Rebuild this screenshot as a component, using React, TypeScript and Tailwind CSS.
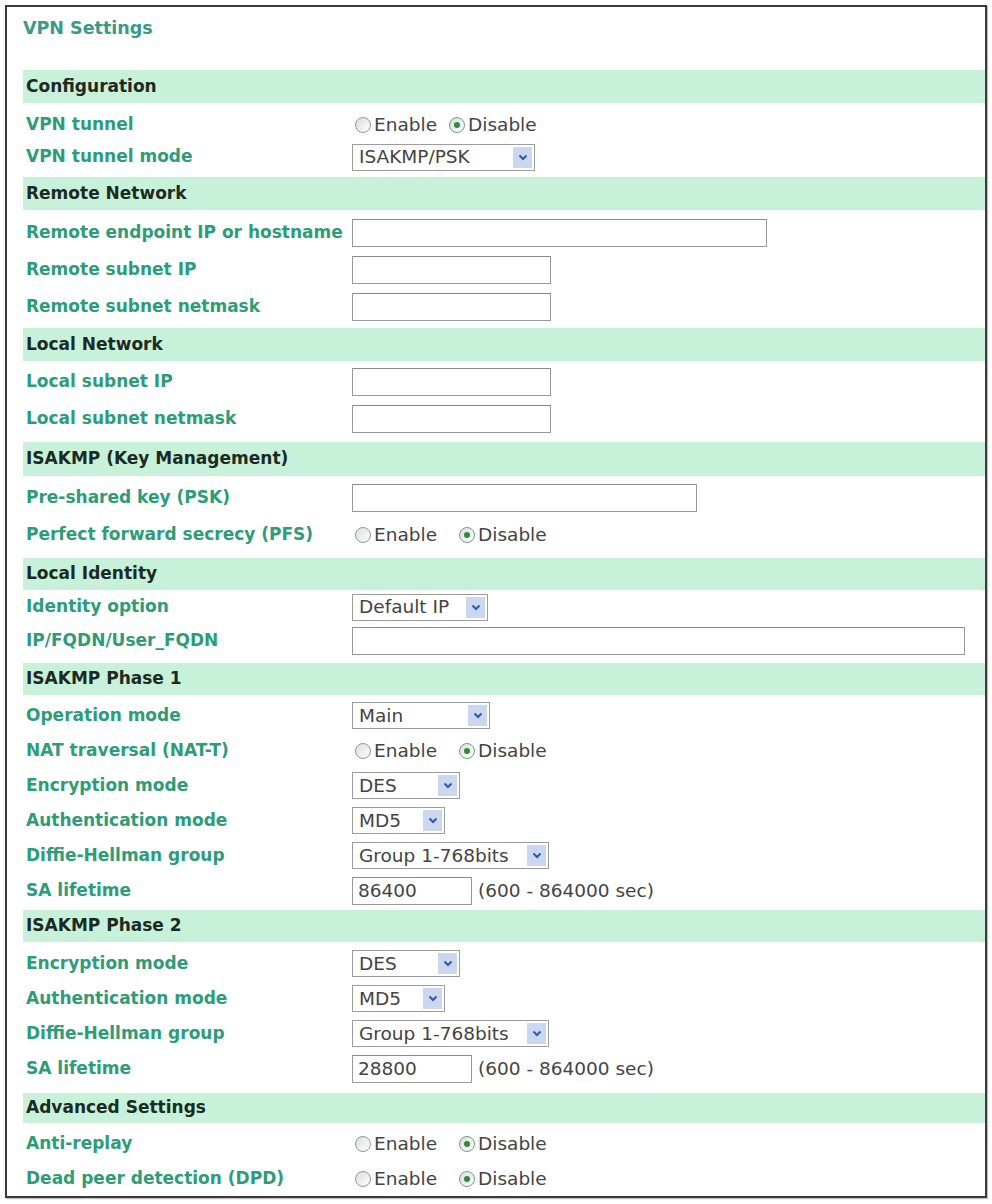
import React from 'react';

type Field =
  | { label: string; kind: 'radio'; h: number; tight?: boolean }
  | { label: string; kind: 'select'; h: number; value: string; w: number }
  | { label: string; kind: 'input'; h: number; w: number; value?: string; note?: string };

type Section = { title: string; hh: number; pt: number; pb: number; fields: Field[] };

const sections: Section[] = [
  {
    title: 'Configuration', hh: 33, pt: 6, pb: 4,
    fields: [
      { label: 'VPN tunnel', kind: 'radio', h: 32, tight: true },
      { label: 'VPN tunnel mode', kind: 'select', h: 32, value: 'ISAKMP/PSK', w: 183 },
    ],
  },
  {
    title: 'Remote Network', hh: 33, pt: 4, pb: 3,
    fields: [
      { label: 'Remote endpoint IP or hostname', kind: 'input', h: 37, w: 415 },
      { label: 'Remote subnet IP', kind: 'input', h: 37, w: 199 },
      { label: 'Remote subnet netmask', kind: 'input', h: 37, w: 199 },
    ],
  },
  {
    title: 'Local Network', hh: 33, pt: 2, pb: 5,
    fields: [
      { label: 'Local subnet IP', kind: 'input', h: 37, w: 199 },
      { label: 'Local subnet netmask', kind: 'input', h: 37, w: 199 },
    ],
  },
  {
    title: 'ISAKMP (Key Management)', hh: 34, pt: 3, pb: 5,
    fields: [
      { label: 'Pre-shared key (PSK)', kind: 'input', h: 37, w: 345 },
      { label: 'Perfect forward secrecy (PFS)', kind: 'radio', h: 37 },
    ],
  },
  {
    title: 'Local Identity', hh: 32, pt: 0, pb: 5,
    fields: [
      { label: 'Identity option', kind: 'select', h: 34, value: 'Default IP', w: 136 },
      { label: 'IP/FQDN/User_FQDN', kind: 'input', h: 34, w: 613 },
    ],
  },
  {
    title: 'ISAKMP Phase 1', hh: 32, pt: 3, pb: 2,
    fields: [
      { label: 'Operation mode', kind: 'select', h: 35, value: 'Main', w: 138 },
      { label: 'NAT traversal (NAT-T)', kind: 'radio', h: 35 },
      { label: 'Encryption mode', kind: 'select', h: 35, value: 'DES', w: 108 },
      { label: 'Authentication mode', kind: 'select', h: 35, value: 'MD5', w: 93 },
      { label: 'Diffie-Hellman group', kind: 'select', h: 35, value: 'Group 1-768bits', w: 197 },
      { label: 'SA lifetime', kind: 'input', h: 35, w: 120, value: '86400', note: '(600 - 864000 sec)' },
    ],
  },
  {
    title: 'ISAKMP Phase 2', hh: 32, pt: 4, pb: 7,
    fields: [
      { label: 'Encryption mode', kind: 'select', h: 35, value: 'DES', w: 108 },
      { label: 'Authentication mode', kind: 'select', h: 35, value: 'MD5', w: 93 },
      { label: 'Diffie-Hellman group', kind: 'select', h: 35, value: 'Group 1-768bits', w: 197 },
      { label: 'SA lifetime', kind: 'input', h: 35, w: 120, value: '28800', note: '(600 - 864000 sec)' },
    ],
  },
  {
    title: 'Advanced Settings', hh: 30, pt: 3, pb: 0,
    fields: [
      { label: 'Anti-replay', kind: 'radio', h: 35 },
      { label: 'Dead peer detection (DPD)', kind: 'radio', h: 35 },
    ],
  },
];

const labelFont = { fontFamily: '"DejaVu Sans", Verdana, sans-serif' };

function Radio({ checked, text }: { checked?: boolean; text: string }) {
  return (
    <span className="inline-flex items-center">
      <span
        className={
          'flex h-[16px] w-[16px] items-center justify-center rounded-full border-[1.5px] bg-gradient-to-br from-[#dcdcdc] to-white ' +
          (checked ? 'border-[#6f9f80]' : 'border-[#8f9898]')
        }
      >
        {checked && <span className="h-[6px] w-[6px] rounded-full bg-[#2f8a3a]" />}
      </span>
      <span className="ml-[3px]">{text}</span>
    </span>
  );
}

function Select({ value, w }: { value: string; w: number }) {
  return (
    <div
      className="flex h-[27px] items-center justify-between border border-[#9c9c9c] bg-white pl-[6px] pr-[2px]"
      style={{ width: w }}
    >
      <span>{value}</span>
      <span className="flex h-[21px] w-[19px] items-center justify-center bg-[#cad7f1]">
        <svg width="10" height="7" viewBox="0 0 10 7">
          <path d="M1.5 1.5 L5 5 L8.5 1.5" fill="none" stroke="#34589c" strokeWidth="2" />
        </svg>
      </span>
    </div>
  );
}

function Input({ w, value }: { w: number; value?: string }) {
  return (
    <div
      className="flex h-[28px] items-center border border-[#999] border-t-[#8a8a8a] bg-white pl-[5px]"
      style={{ width: w }}
    >
      {value}
    </div>
  );
}

function Value({ f }: { f: Field }) {
  if (f.kind === 'radio') {
    return (
      <div className={'flex items-center pl-[3px] ' + (f.tight ? 'gap-[12px]' : 'gap-[22px]')}>
        <Radio text="Enable" />
        <Radio checked text="Disable" />
      </div>
    );
  }
  if (f.kind === 'select') return <Select value={f.value} w={f.w} />;
  return (
    <div className="flex items-center gap-[6px]">
      <Input w={f.w} value={f.value} />
      {f.note && <span>{f.note}</span>}
    </div>
  );
}

export default function App() {
  return (
    <div className="bg-white p-[5px]" style={labelFont}>
      <div className="flex w-[982px] flex-col border-2 border-[#3b3b3b] bg-white pl-[16px] shadow-[1px_1px_1px_rgba(0,0,0,0.25)]">
        <div className="h-[63px] pt-[10px]">
          <h1 className="text-[17.5px] font-bold leading-[22px] text-[#3a9a86]">VPN Settings</h1>
        </div>

        {sections.map((s) => (
          <div key={s.title}>
            <div
              className="flex items-center bg-[#c8f1da] pl-[3px] text-[17px] font-bold text-[#1c2a22]"
              style={{ height: s.hh }}
            >
              {s.title}
            </div>
            <div style={{ paddingTop: s.pt, paddingBottom: s.pb }}>
              {s.fields.map((f, i) => (
                <div key={i} className="flex items-center" style={{ height: f.h }}>
                  <div className="w-[329px] shrink-0 pl-[3px] text-[17px] font-bold text-[#2d9c77]">
                    {f.label}
                  </div>
                  <div className="text-[18.5px] text-[#444]">
                    <Value f={f} />
                  </div>
                </div>
              ))}
            </div>
          </div>
        ))}
      </div>
    </div>
  );
}
